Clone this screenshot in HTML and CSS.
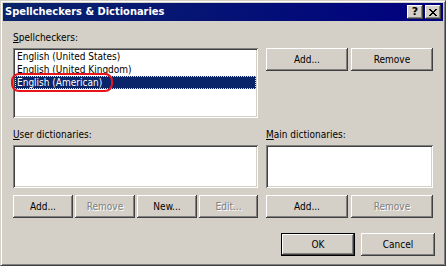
FILE: index.html
```html
<!DOCTYPE html>
<html>
<head>
<meta charset="utf-8">
<link rel="stylesheet" href="styles.css">
</head>
<body>
<div class="window">
  <div class="titlebar">
    <span class="title">Spellcheckers &amp; Dictionaries</span>
    <div class="caption-buttons">
      <span class="cap-btn help">?</span>
      <span class="cap-btn close"><svg width="8" height="7" viewBox="0 0 8 7" shape-rendering="crispEdges"><path d="M0 0h2v1H0zM6 0h2v1H6zM1 1h2v1H1zM5 1h2v1H5zM2 2h4v1H2zM3 3h2v1H3zM2 4h4v1H2zM1 5h2v1H1zM5 5h2v1H5zM0 6h2v1H0zM6 6h2v1H6z" fill="#000"/></svg></span>
    </div>
  </div>
  <div class="content">
    <div class="label l1"><u>S</u>pellcheckers:</div>
    <div class="listbox list1">
      <div class="item">English (United States)</div>
      <div class="item">English (United Kingdom)</div>
      <div class="item selected">English (American)</div>
      <div class="annotation"></div>
    </div>
    <div class="btn-pair pair1">
      <button class="btn">Add...</button>
      <button class="btn">Remove</button>
    </div>
    <div class="label l2"><u>U</u>ser dictionaries:</div>
    <div class="label l3"><u>M</u>ain dictionaries:</div>
    <div class="listbox list2"></div>
    <div class="listbox list3"></div>
    <div class="btn-row">
      <button class="btn">Add...</button>
      <button class="btn disabled">Remove</button>
      <button class="btn">New...</button>
      <button class="btn disabled">Edit...</button>
    </div>
    <div class="btn-pair pair3">
      <button class="btn">Add...</button>
      <button class="btn disabled">Remove</button>
    </div>
    <div class="footer">
      <button class="btn wide default">OK</button>
      <button class="btn wide">Cancel</button>
    </div>
  </div>
</div>
</body>
</html>
```
FILE: styles.css
```css
* { box-sizing: border-box; }
html, body { margin: 0; padding: 0; }
body {
  width: 446px;
  height: 266px;
  overflow: hidden;
  background: #d4d0c8;
  font-family: "DejaVu Sans Condensed", "DejaVu Sans", sans-serif;
  font-stretch: condensed;
  font-size: 10px;
  line-height: 13px;
  color: #000;
}
.window {
  width: 446px;
  height: 266px;
  background: #d4d0c8;
  border: 1px solid;
  border-color: #d4d0c8 #404040 #404040 #d4d0c8;
  box-shadow: inset 1px 1px #fff, inset -1px -1px #808080;
  padding: 2px;
  display: flex;
  flex-direction: column;
}
.titlebar {
  height: 18px;
  flex: none;
  background: linear-gradient(to right, #0a246a, #000080);
  display: flex;
  align-items: center;
  justify-content: space-between;
  padding: 0 2px;
}
.title {
  color: #fff;
  font-weight: bold;
  font-size: 11px;
  line-height: 18px;
  white-space: nowrap;
}
.caption-buttons { display: flex; gap: 2px; }
.cap-btn {
  width: 16px;
  height: 14px;
  background: #d4d0c8;
  box-shadow: inset -1px -1px #404040, inset 1px 1px #fff, inset -2px -2px #808080, inset 2px 2px #d4d0c8;
  display: flex;
  align-items: center;
  justify-content: center;
}
.cap-btn.help {
  font-family: "DejaVu Sans", sans-serif;
  font-stretch: normal;
  font-weight: bold;
  font-size: 11px;
  line-height: 14px;
}
.content {
  flex: 1;
  padding: 10px 0 0 10px;
  display: grid;
  grid-template-columns: 245px 167px;
  column-gap: 8px;
  align-content: start;
}
.label { height: 13px; white-space: nowrap; }
.l1 { grid-column: 1; grid-row: 1; }
.list1 { grid-column: 1; grid-row: 2; margin-top: 4px; height: 70px; }
.pair1 { grid-column: 2; grid-row: 2; margin-top: 4px; align-self: start; }
.l2 { grid-column: 1; grid-row: 3; margin-top: 10px; }
.l3 { grid-column: 2; grid-row: 3; margin-top: 10px; }
.list2 { grid-column: 1; grid-row: 4; margin-top: 4px; height: 43px; }
.list3 { grid-column: 2; grid-row: 4; margin-top: 4px; height: 43px; }
.btn-row { grid-column: 1; grid-row: 5; margin-top: 7px; }
.pair3 { grid-column: 2; grid-row: 5; margin-top: 7px; }
.footer {
  grid-column: 1 / -1;
  grid-row: 6;
  margin-top: 15px;
  margin-right: -2px;
  display: flex;
  justify-content: flex-end;
  gap: 6px;
}
.listbox {
  position: relative;
  background: #fff;
  padding: 2px;
  box-shadow: inset 1px 1px #808080, inset -1px -1px #fff, inset 2px 2px #404040, inset -2px -2px #d4d0c8;
}
.item {
  height: 13px;
  line-height: 13px;
  padding-left: 2px;
  white-space: nowrap;
}
.item.selected {
  background: #0a246a;
  color: #fff;
  outline: 1px dotted #f5db95;
  outline-offset: -1px;
}
.annotation {
  position: absolute;
  left: -2px;
  top: 25px;
  width: 102px;
  height: 19px;
  border: 2px solid #e8141c;
  border-radius: 8px;
}
.btn {
  font: inherit;
  height: 23px;
  border: none;
  margin: 0;
  padding: 0;
  background: #d4d0c8;
  color: #000;
  line-height: 13px;
  box-shadow: inset -1px -1px #404040, inset 1px 1px #fff, inset -2px -2px #808080, inset 2px 2px #d4d0c8;
}
.btn.disabled { color: #808080; text-shadow: 1px 1px 0 #fff; }
.btn.default { border: 1px solid #000; }
.btn.wide { width: 74px; }
.btn-pair { display: grid; grid-template-columns: 82px 82px; column-gap: 3px; }
.btn-row { display: grid; grid-template-columns: 60px 60px 60px 59px; column-gap: 2px; }
```
